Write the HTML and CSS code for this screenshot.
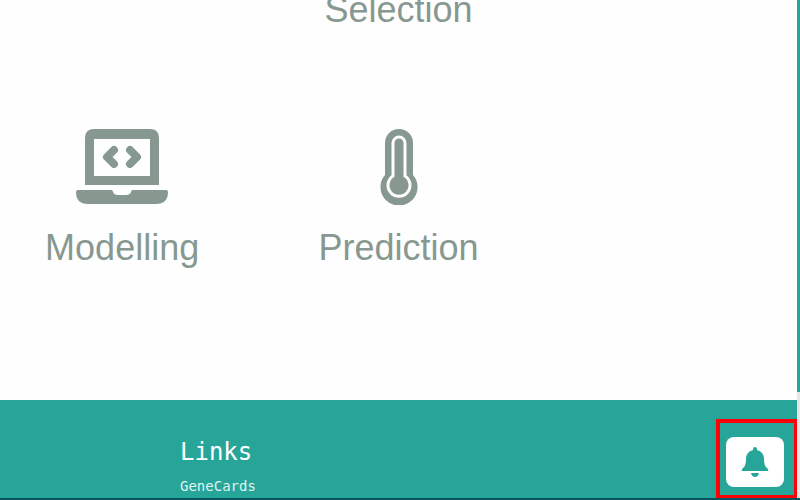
FILE: index.html
```
<!DOCTYPE html>
<html lang="en">
<head>
<meta charset="utf-8">
<meta name="viewport" content="width=device-width, initial-scale=1">
<title>Modelling and Prediction</title>
<link rel="stylesheet" href="styles.css">
</head>
<body>
<div class="shell">
  <div class="page">
    <main class="features">
      <section class="feature feature-second">
        <h2>Selection</h2>
      </section>
      <section class="feature">
        <svg class="icon" viewBox="0 0 94 76" aria-hidden="true">
          <path fill-rule="evenodd" d="M19 0H75Q84 0 84 9V56H10V9Q10 0 19 0ZM19 10V47H75V10Z"/>
          <path d="M3 61H36Q38 61 38 63Q39 66 43 66H51Q55 66 56 63Q56 61 58 61H91Q93 61 93 63Q93 75 81 75H13Q1 75 1 63Q1 61 3 61Z"/>
          <path class="stroke" d="M39 21L32 28L39 35M55 21L62 28L55 35"/>
        </svg>
        <h2>Modelling</h2>
      </section>
      <section class="feature">
        <svg class="icon" viewBox="0 0 94 76" aria-hidden="true">
          <path d="M34 14A14 14 0 0 1 62 14V46A18.5 18.5 0 1 1 34 46Z"/>
          <path class="tube" d="M42 14A6 6 0 0 1 54 14V47A11 11 0 1 1 42 47Z"/>
        </svg>
        <h2>Prediction</h2>
      </section>
    </main>
    <footer class="footer">
      <nav class="links" aria-label="Links">
        <h3>Links</h3>
        <a href="#genecards">GeneCards</a>
      </nav>
      <div class="highlight">
        <button class="bell" type="button" aria-label="Notifications">
          <svg viewBox="0 0 28 30" aria-hidden="true">
            <path d="M14 0Q16 0 16 3Q23 5 23 12Q23 19 26 21Q28 23 27 24H1Q0 23 2 21Q5 19 5 12Q5 5 12 3Q12 0 14 0Z"/>
            <path d="M10 26H18Q17 30 14 30Q11 30 10 26Z"/>
          </svg>
        </button>
      </div>
    </footer>
  </div>
  <div class="rail"><div class="thumb"></div></div>
</div>
</body>
</html>
```
FILE: styles.css
```
* {
  box-sizing: border-box;
}

body {
  margin: 0;
  background: #fefefe;
  font-family: "Liberation Sans", Arial, sans-serif;
}

.shell {
  display: flex;
  height: 100vh;
  overflow: hidden;
  border-bottom: 2px solid #075460;
}

.page {
  flex: 1;
  min-width: 0;
  display: flex;
  flex-direction: column;
}

.features {
  flex: 1;
  display: grid;
  grid-template-columns: repeat(3, 1fr);
  align-content: start;
  row-gap: 98px;
  margin: -11px -16px 0;
}

.feature {
  text-align: center;
  color: #879890;
}

.feature-second {
  grid-column: 2 / 4;
  width: 50%;
}

.feature h2 {
  margin: 0;
  font-size: 36px;
  font-weight: 400;
  line-height: 42px;
}

.icon {
  display: block;
  width: 94px;
  height: 76px;
  margin: 0 auto 22px;
  fill: #879890;
}

.stroke {
  fill: none;
  stroke: #879890;
  stroke-width: 8;
  stroke-linecap: round;
  stroke-linejoin: round;
}

.tube {
  fill: none;
  stroke: #fefefe;
  stroke-width: 3;
}

.footer {
  display: flex;
  justify-content: space-between;
  height: 98px;
  overflow: hidden;
  background: #28a599;
}

.links {
  padding: 36px 0 0 180px;
  color: #fff;
  font-family: "DejaVu Sans Mono", monospace;
}

.links h3 {
  margin: 0 0 6px;
  font-size: 24px;
  font-weight: 400;
  line-height: 32px;
}

.links a {
  display: block;
  color: #dff5f1;
  font-size: 14px;
  line-height: 24px;
  text-decoration: none;
}

.highlight {
  flex: none;
  position: relative;
  z-index: 1;
  width: 82px;
  height: 80px;
  margin: 19px -1px 0 0;
  padding: 14px 6px;
  border: 4px solid #fb0207;
}

.bell {
  display: flex;
  align-items: center;
  justify-content: center;
  width: 58px;
  height: 50px;
  padding: 0;
  border: 0;
  border-radius: 8px;
  background: #fff;
}

.bell svg {
  width: 28px;
  height: 30px;
  fill: #28a599;
}

.rail {
  width: 3px;
  background: #e6e8e8;
}

.thumb {
  height: 392px;
  background: #28a599;
}
```
